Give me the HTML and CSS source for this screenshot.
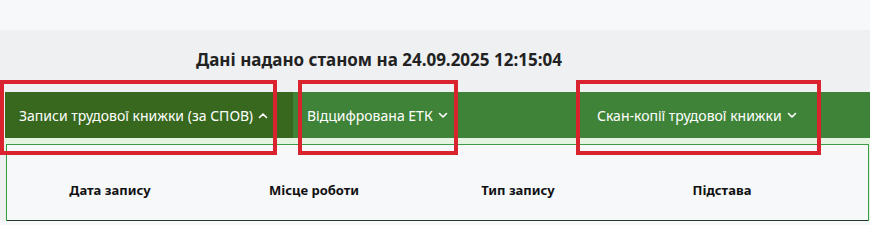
FILE: index.html
```html
<!DOCTYPE html>
<html lang="uk">
<head>
<meta charset="utf-8">
<link rel="stylesheet" href="styles.css">
</head>
<body>
<div class="top"></div>
<div class="panel">
  <h2 class="title">Дані надано станом на 24.09.2025 12:15:04</h2>
  <div class="tabs">
    <div class="tab tab-active">Записи трудової книжки (за СПОВ)
      <svg class="chev" width="10" height="7" viewBox="0 0 10 7"><polyline points="1.5,5.5 5,2 8.5,5.5" /></svg>
    </div>
    <div class="tab">Відцифрована ЕТК
      <svg class="chev" width="10" height="7" viewBox="0 0 10 7"><polyline points="1.5,1.5 5,5 8.5,1.5" /></svg>
    </div>
    <div class="tab tab-third">Скан-копії трудової книжки
      <svg class="chev" width="10" height="7" viewBox="0 0 10 7"><polyline points="1.5,1.5 5,5 8.5,1.5" /></svg>
    </div>
  </div>
  <div class="content">
    <div class="card">
      <div class="thead">
        <div class="th">Дата запису</div>
        <div class="th">Місце роботи</div>
        <div class="th">Тип запису</div>
        <div class="th">Підстава</div>
        <div class="th"></div>
      </div>
    </div>
  </div>
</div>
<div class="mark mark-1"></div>
<div class="mark mark-2"></div>
<div class="mark mark-3"></div>
</body>
</html>
```

FILE: styles.css
```css
html, body {
  margin: 0;
  padding: 0;
}
body {
  background: #f7f8f9;
  font-family: "Noto Sans", "Open Sans", sans-serif;
  width: 870px;
  height: 225px;
  overflow: hidden;
  position: relative;
}
.top {
  height: 30px;
  background: #f7f8f9;
}
.panel {
  background: #eef0f2;
  padding-left: 5px;
}
.title {
  margin: 0;
  height: 62px;
  box-sizing: border-box;
  padding: 18px 0 0 191px;
  font-size: 17px;
  line-height: 24px;
  font-weight: 700;
  color: #222;
}
.tabs {
  display: grid;
  grid-template-columns: 288px 288px 1fr;
  height: 46px;
  background: #3f8338;
}
.tab {
  display: flex;
  align-items: center;
  gap: 5px;
  padding-left: 14px;
  color: #fff;
  font-size: 14px;
  white-space: nowrap;
}
.tab-active {
  background: #37681e;
}
.tab-third {
  padding-left: 16px;
}
.chev {
  fill: none;
  stroke: #fff;
  stroke-width: 1.6;
  stroke-linecap: round;
  stroke-linejoin: round;
}
.content {
  background: #e4f4e1;
  padding-top: 6px;
}
.card {
  margin-left: 1px;
  margin-right: 1px;
  border: 1px solid #3c9c46;
  border-bottom: none;
  background: #f7f8fa;
}
.thead {
  display: grid;
  grid-template-columns: 204px 204px 204px 204px 1fr;
  padding: 35px 0 20px 1px;
  border-bottom: 1px solid #1d3b2a;
}
.th {
  text-align: center;
  font-size: 13px;
  line-height: 20px;
  font-weight: 700;
  color: #111;
}
.mark {
  position: absolute;
  top: 80px;
  height: 75px;
  box-sizing: border-box;
  border: 4px solid #d9232e;
}
.mark-1 {
  left: 0;
  width: 277px;
}
.mark-2 {
  left: 298px;
  width: 160px;
}
.mark-3 {
  left: 576px;
  width: 245px;
}
```
